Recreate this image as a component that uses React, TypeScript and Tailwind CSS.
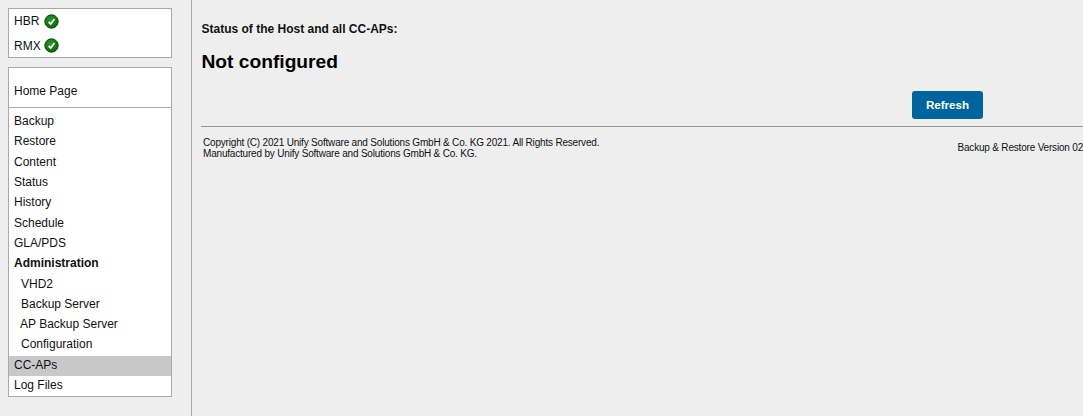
const font = { fontFamily: '"Liberation Sans", Arial, sans-serif' };

function Check() {
  return (
    <svg width="15" height="15" viewBox="0 0 15 15" className="shrink-0">
      <defs>
        <radialGradient id="okGrad" cx="45%" cy="40%" r="65%">
          <stop offset="0%" stopColor="#2f9a2f" />
          <stop offset="100%" stopColor="#056405" />
        </radialGradient>
      </defs>
      <circle cx="7.5" cy="7.5" r="6.7" fill="url(#okGrad)" stroke="#0a4f0a" strokeWidth="1" />
      <path d="M4.6 7.8 L6.7 10 L10.5 4.9" fill="none" stroke="#fff" strokeWidth="1.7" />
    </svg>
  );
}

const rows: [string, string][] = [
  ["Backup", "h-[20.33px] pl-[5px]"],
  ["Restore", "h-[20.33px] pl-[5px]"],
  ["Content", "h-[20.33px] pl-[5px]"],
  ["Status", "h-[20.33px] pl-[5px]"],
  ["History", "h-[20.33px] pl-[5px]"],
  ["Schedule", "h-[20.33px] pl-[5px]"],
  ["GLA/PDS", "h-[20.33px] pl-[5px]"],
  ["Administration", "h-[20.33px] pl-[5px] font-bold"],
  ["VHD2", "h-[20.33px] pl-[12px]"],
  ["Backup Server", "h-[20.33px] pl-[12px]"],
  ["AP Backup Server", "h-[20.33px] pl-[11px]"],
  ["Configuration", "h-[21.33px] pb-[2px] pl-[12px]"],
  ["CC-APs", "h-[19.67px] pb-[1px] pl-[5px] bg-[#c8c8c8]"],
  ["Log Files", "h-[20px] pb-[1px] pl-[5px]"],
];

export default function App() {
  return (
    <div style={font} className="flex h-[416px] w-[1083px] overflow-hidden bg-[#eeeeee] text-[12px] text-[#111111]">
      <aside className="h-full w-[192px] shrink-0 border-r border-[#a9a9a9] pl-[8px] pt-[8px]">
        <div className="h-[50px] w-[164px] border border-[#a9a9a9] bg-white pl-[5px]">
          <div className="flex h-[24px] items-center"><span className="w-[30px]">HBR</span><Check /></div>
          <div className="flex h-[25px] items-center"><span className="w-[30px]">RMX</span><Check /></div>
        </div>
        <div className="mt-[9px] h-[330px] w-[164px] border border-[#a9a9a9] bg-white">
          <div className="flex h-[40px] items-end border-b border-[#a9a9a9] pb-[7px] pl-[5px]">Home Page</div>
          <div className="pt-[3px]">
            {rows.map(([label, cls]) => (
              <div key={label} className={`flex items-center ${cls}`}>{label}</div>
            ))}
          </div>
        </div>
      </aside>
      <main className="w-[891px] shrink-0 pl-[9px]">
        <div className="pl-[0.5px] pt-[22px] text-[12px] leading-[14px] font-bold">Status of the Host and all CC-APs:</div>
        <div className="mt-[14px] pl-[0.5px] text-[19.2px] leading-[24px] font-bold text-black">Not configured</div>
        <div className="mt-[17px] pl-[711px]">
          <button className="h-[28px] w-[71px] rounded-[3px] bg-[#00659f] text-[11.6px] font-bold text-white">Refresh</button>
        </div>
        <div className="mt-[7px] border-t border-[#999999]" />
        <div className="flex items-start pl-[2px] pt-[10px] text-[10px] leading-[11px] tracking-[-0.19px]">
          <div className="w-[396px] whitespace-nowrap">
            <div>Copyright (C) 2021 Unify Software and Solutions GmbH &amp; Co. KG 2021. All Rights Reserved.</div>
            <div>Manufactured by Unify Software and Solutions GmbH &amp; Co. KG.</div>
          </div>
          <div className="ml-[358.5px] mt-[5px] whitespace-nowrap">Backup &amp; Restore Version 02</div>
        </div>
      </main>
    </div>
  );
}
